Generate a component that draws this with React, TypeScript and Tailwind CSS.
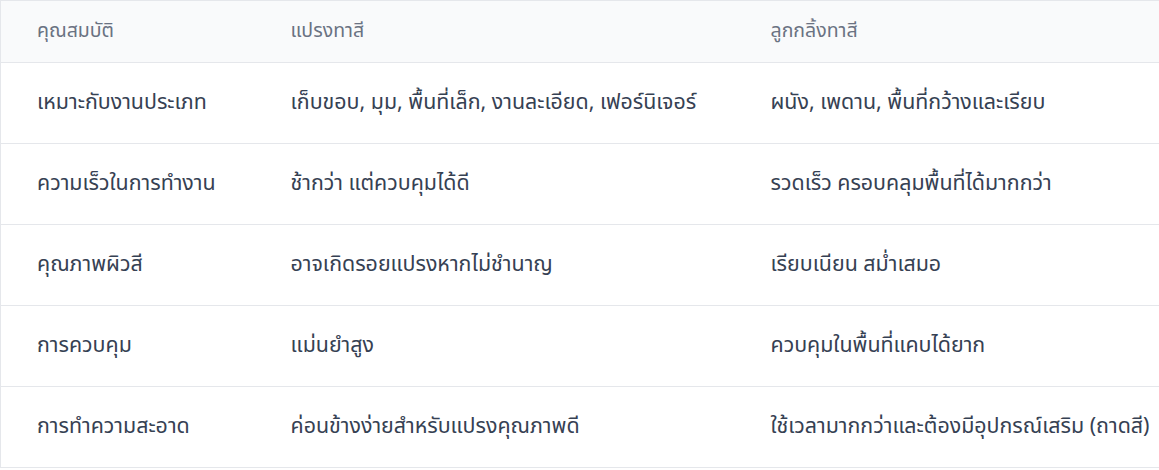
const rows = [
  {
    label: "เหมาะกับงานประเภท",
    brush: "เก็บขอบ, มุม, พื้นที่เล็ก, งานละเอียด, เฟอร์นิเจอร์",
    roller: "ผนัง, เพดาน, พื้นที่กว้างและเรียบ",
  },
  {
    label: "ความเร็วในการทำงาน",
    brush: "ช้ากว่า แต่ควบคุมได้ดี",
    roller: "รวดเร็ว ครอบคลุมพื้นที่ได้มากกว่า",
  },
  {
    label: "คุณภาพผิวสี",
    brush: "อาจเกิดรอยแปรงหากไม่ชำนาญ",
    roller: "เรียบเนียน สม่ำเสมอ",
  },
  {
    label: "การควบคุม",
    brush: "แม่นยำสูง",
    roller: "ควบคุมในพื้นที่แคบได้ยาก",
  },
  {
    label: "การทำความสะอาด",
    brush: "ค่อนข้างง่ายสำหรับแปรงคุณภาพดี",
    roller: "ใช้เวลามากกว่าและต้องมีอุปกรณ์เสริม (ถาดสี)",
  },
];

export default function App() {
  return (
    <div className="w-[1159px] h-[470px] overflow-hidden bg-white font-['Noto_Sans_Thai','Noto_Sans',sans-serif]">
      <table className="table-fixed w-[1220px] border-collapse border-l border-t border-gray-200 whitespace-nowrap">
        <colgroup>
          <col className="w-[254px]" />
          <col className="w-[480px]" />
          <col />
        </colgroup>
        <thead>
          {/* Header */}
          <tr className="bg-gray-50 border-b border-gray-200">
            <th className="h-[62px] px-9 text-left text-[19.5px] font-normal text-gray-500">คุณสมบัติ</th>
            <th className="h-[62px] px-9 text-left text-[19.5px] font-normal text-gray-500">แปรงทาสี</th>
            <th className="h-[62px] px-9 text-left text-[19.5px] font-normal text-gray-500">ลูกกลิ้งทาสี</th>
          </tr>
        </thead>
        <tbody>
          {rows.map((row) => (
            <tr key={row.label} className="border-b border-gray-200">
              <td className="h-[81px] px-9 text-[21.4px] text-gray-700">{row.label}</td>
              <td className="h-[81px] px-9 text-[21.4px] text-gray-700">{row.brush}</td>
              <td className="h-[81px] px-9 text-[21.4px] text-gray-700">{row.roller}</td>
            </tr>
          ))}
        </tbody>
      </table>
    </div>
  );
}
